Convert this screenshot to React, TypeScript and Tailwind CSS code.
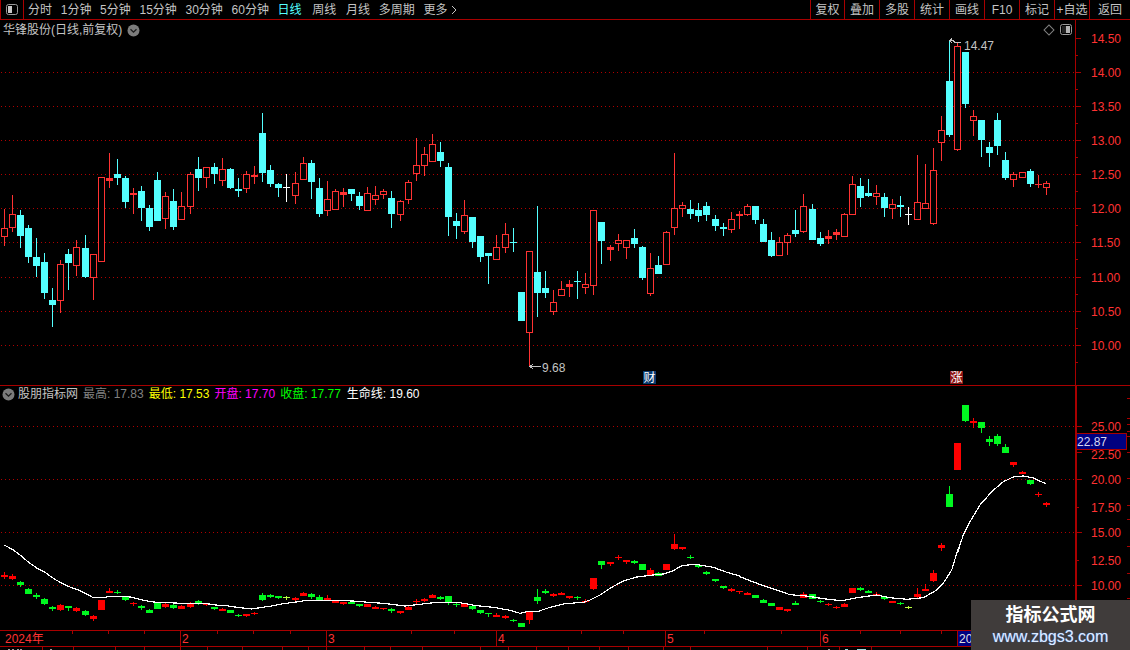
import React from "react";

const RED = "#ff3232";
const CYAN = "#54ffff";
const LINE = "#a80000";
const GRID = "#b00000";

type C = [string, number, number, number, number];

const cx = (i: number) => Math.floor(4.3 + i * 8.077);
const conv = (rows: C[], off: number): C[] =>
  rows.map(([t, a, b, c, d]) => [t, off + a / 3, off + b / 3, off + c / 3, off + d / 3]);

const upper: C[] = [
  ...conv(
    [
      ["r", 237, 295, 320, 348], ["r", 195, 253, 293, 305], ["c", 240, 255, 318, 354], ["c", 285, 294, 381, 399],
      ["c", 324, 381, 408, 441], ["c", 369, 396, 489, 507], ["c", 474, 510, 525, 591], ["r", 390, 403, 513, 549],
      ["c", 358, 372, 399, 480], ["r", 330, 352, 407, 438], ["c", 315, 354, 441, 444], ["r", 372, 373, 443, 510],
      ["r", 141, 142, 395, 396], ["r", 69, 145, 152, 174], ["c", 87, 132, 144, 165], ["c", 138, 144, 216, 234],
      ["r", 174, 189, 195, 252], ["c", 168, 183, 234, 273], ["c", 225, 234, 291, 303], ["c", 126, 150, 273, 273],
      ["r", 186, 199, 266, 297], ["c", 177, 213, 291, 300], ["r", 186, 229, 269, 270], ["r", 126, 133, 231, 252],
      ["c", 81, 117, 144, 183], ["r", 111, 112, 143, 174], ["c", 99, 111, 132, 162], ["r", 84, 118, 152, 168],
      ["c", 114, 117, 174, 177], ["c", 144, 177, 183, 201], ["r", 123, 133, 176, 189], ["r", 108, 135, 141, 162],
      ["c", -51, 9, 129, 156],
      ["c", 105, 120, 162, 171], ["c", 159, 162, 174, 201], ["w", 132, 171, 173, 216], ["r", 126, 160, 197, 222],
      ["r", 81, 100, 150, 150], ["c", 90, 99, 156, 207], ["c", 144, 174, 252, 261], ["r", 153, 208, 242, 258],
      ["r", 178, 184, 239, 240], ["r", 174, 187, 194, 231], ["c", 177, 177, 192, 213], ["c", 186, 198, 228, 240],
      ["r", 171, 190, 242, 243], ["r", 168, 196, 209, 225], ["r", 178, 184, 194, 207], ["c", 183, 204, 252, 294],
      ["r", 210, 214, 254, 273], ["r", 150, 157, 209, 222], ["r", 24, 106, 132, 153], ["r", 51, 73, 107, 138],
      ["r", 12, 43, 95, 96], ["c", 36, 66, 93, 111], ["c", 99, 111, 261, 318], ["c", 249, 273, 288, 327],
      ["r", 210, 256, 305, 312], ["c", 261, 261, 336, 354], ["c", 318, 318, 381, 396], ["c", 369, 369, 378, 462],
      ["r", 315, 352, 389, 390], ["r", 279, 313, 353, 369], ["c", 294, 336, 339, 366], ["c", 486, 486, 573, 573],
    ],
    130
  ),
  ...conv(
    [
      ["r", 334, 334, 578, 680], ["c", 198, 396, 459, 531], ["c", 393, 444, 459, 474], ["r", 450, 487, 515, 525],
      ["r", 423, 448, 467, 468], ["r", 420, 433, 440, 471], ["c", 393, 424, 426, 477], ["r", 399, 433, 443, 462],
      ["r", 210, 211, 437, 465], ["c", 246, 246, 303, 372], ["r", 315, 322, 329, 363], ["r", 282, 301, 311, 333],
      ["r", 301, 301, 323, 357], ["c", 267, 294, 312, 324], ["c", 318, 321, 414, 420], ["r", 339, 385, 461, 468],
      ["c", 348, 375, 402, 402], ["r", 273, 277, 374, 375], ["r", 39, 205, 263, 285], ["r", 186, 196, 206, 231],
      ["c", 180, 207, 222, 237], ["c", 189, 210, 228, 246], ["c", 186, 198, 225, 243], ["c", 225, 237, 258, 273],
      ["c", 249, 261, 267, 288], ["r", 216, 238, 269, 279], ["r", 213, 222, 228, 267], ["r", 192, 199, 224, 228],
      ["c", 198, 198, 240, 252], ["c", 237, 252, 306, 306], ["c", 276, 300, 348, 351],
    ],
    140
  ),
  ...conv(
    [
      ["r", 620, 637, 677, 677], ["r", 609, 616, 638, 675], ["c", 540, 600, 612, 621], ["r", 492, 529, 605, 609],
      ["c", 522, 537, 630, 630], ["c", 606, 624, 642, 648], ["r", 600, 619, 626, 642], ["r", 597, 607, 614, 630],
      ["r", 549, 553, 620, 621], ["r", 438, 463, 554, 555], ["c", 444, 468, 504, 531], ["c", 447, 489, 498, 501],
      ["r", 465, 490, 500, 525], ["c", 489, 501, 534, 561], ["r", 507, 523, 536, 567], ["c", 498, 525, 531, 561],
      ["w", 531, 551, 553, 585], ["r", 375, 517, 569, 570], ["r", 402, 520, 536, 537], ["r", 354, 421, 581, 585],
      ["r", 258, 301, 338, 393], ["c", 30, 153, 315, 321], ["r", 40, 49, 361, 362], ["c", 66, 66, 222, 234],
      ["r", 240, 259, 272, 318], ["c", 270, 270, 330, 381], ["c", 336, 351, 369, 411], ["c", 249, 270, 348, 375],
      ["c", 366, 390, 444, 450], ["r", 426, 433, 449, 471], ["r", 427, 427, 443, 443], ["c", 417, 423, 462, 471],
      ["r", 435, 462, 465, 474], ["r", 453, 460, 473, 495],
    ],
    30
  ),
];

const lower: C[] = [
  ...conv(
    [
      ["r", 96, 104, 110, 117], ["r", 102, 108, 117, 120], ["g", 123, 126, 135, 141], ["g", 144, 147, 162, 162],
      ["g", 159, 165, 171, 177], ["g", 174, 177, 192, 195], ["g", 198, 202, 208, 213], ["r", 192, 195, 210, 213],
      ["g", 198, 198, 203, 213], ["r", 200, 204, 213, 216], ["g", 210, 213, 225, 228], ["r", 225, 228, 237, 243],
      ["r", 180, 180, 210, 210], ["r", 144, 153, 159, 159], ["g", 150, 155, 158, 162], ["g", 168, 168, 180, 183],
      ["r", 186, 189, 191, 198], ["g", 195, 198, 204, 210], ["g", 207, 210, 219, 219], ["g", 186, 189, 207, 207],
      ["r", 189, 192, 201, 204], ["g", 192, 195, 204, 207], ["r", 195, 198, 207, 207], ["r", 186, 189, 201, 204],
      ["g", 180, 184, 189, 195], ["r", 189, 189, 195, 198], ["g", 201, 201, 207, 210], ["r", 204, 207, 213, 213],
      ["g", 210, 210, 219, 219], ["g", 222, 226, 228, 232], ["r", 222, 222, 228, 231], ["r", 216, 219, 221, 225],
      ["g", 159, 165, 180, 183], ["g", 162, 165, 171, 174], ["g", 168, 168, 174, 177], ["y", 168, 170, 171, 180],
      ["r", 171, 174, 179, 183], ["r", 156, 159, 167, 168], ["g", 159, 162, 171, 177], ["g", 165, 171, 183, 183],
      ["r", 165, 174, 180, 183], ["r", 180, 180, 189, 189], ["r", 186, 186, 191, 195], ["g", 186, 186, 192, 192],
      ["g", 192, 192, 197, 201], ["r", 191, 191, 201, 201],
    ],
    540
  ),
  ...conv(
    [
      ["r", 258, 261, 267, 268], ["r", 263, 264, 267, 270], ["g", 263, 266, 273, 279], ["r", 273, 273, 279, 282],
      ["r", 259, 261, 270, 270], ["r", 238, 244, 247, 252], ["r", 234, 237, 243, 245], ["r", 222, 225, 234, 234],
      ["g", 228, 231, 237, 240], ["g", 228, 228, 249, 255], ["g", 249, 253, 255, 261], ["r", 249, 252, 261, 261],
      ["g", 258, 258, 267, 270], ["g", 270, 270, 279, 282], ["g", 279, 279, 282, 291], ["r", 280, 285, 290, 291],
      ["r", 285, 288, 294, 297], ["g", 297, 300, 303, 306], ["g", 309, 309, 321, 321], ["r", 273, 274, 300, 312],
      ["g", 207, 231, 243, 252], ["g", 207, 212, 219, 222], ["r", 219, 222, 228, 231], ["r", 216, 219, 225, 226],
      ["r", 228, 228, 234, 237], ["g", 228, 232, 235, 240], ["r", 237, 242, 245, 249], ["r", 174, 174, 207, 210],
      ["g", 123, 123, 135, 147], ["r", 126, 126, 132, 138], ["r", 105, 111, 114, 120], ["r", 120, 120, 126, 132],
      ["g", 120, 123, 129, 132], ["g", 132, 132, 150, 150], ["r", 144, 150, 165, 166], ["g", 156, 160, 168, 168],
      ["r", 132, 132, 150, 150], ["r", 42, 72, 87, 90], ["r", 81, 81, 87, 90], ["g", 105, 110, 113, 117],
      ["g", 132, 134, 141, 144], ["g", 153, 156, 162, 165], ["g", 177, 177, 183, 186], ["g", 198, 198, 204, 207],
      ["r", 204, 207, 213, 215], ["r", 213, 213, 216, 222],
    ],
    520
  ),
  ...conv(
    [
      ["r", 156, 159, 164, 165], ["g", 165, 165, 174, 174], ["g", 177, 180, 189, 189], ["g", 189, 189, 198, 198],
      ["r", 201, 201, 210, 210], ["r", 207, 207, 212, 215], ["g", 183, 189, 195, 195], ["r", 156, 162, 174, 174],
      ["g", 162, 162, 177, 177], ["g", 180, 183, 186, 189], ["r", 189, 192, 195, 198], ["r", 198, 201, 204, 207],
      ["r", 189, 192, 201, 201], ["r", 144, 144, 159, 159], ["g", 141, 144, 150, 153], ["g", 150, 152, 159, 159],
      ["r", 156, 161, 164, 168], ["g", 168, 171, 177, 180], ["r", 183, 183, 188, 190], ["g", 186, 189, 192, 195],
      ["y", 198, 201, 202, 207], ["r", 144, 162, 171, 174], ["r", 132, 147, 153, 153], ["r", 90, 99, 123, 126],
      ["r", 9, 15, 24, 33],
    ],
    540
  ),
  ...conv(
    [
      ["g", 303, 327, 366, 366], ["r", 174, 174, 255, 255], ["g", 60, 60, 108, 110], ["r", 99, 108, 114, 129],
      ["g", 111, 111, 129, 144], ["g", 153, 162, 171, 183], ["g", 147, 153, 177, 183], ["g", 178, 186, 204, 204],
      ["r", 231, 231, 240, 246], ["r", 258, 261, 266, 268], ["g", 285, 285, 297, 300], ["r", 321, 327, 330, 336],
      ["r", 351, 354, 360, 366],
    ],
    385
  ),
];

const lifePts: [number, number, number[]][] = [
  [0, 540, [13,15, 40,30, 60,45, 85,66, 110,84, 135,97, 160,115, 185,130, 210,141, 235,150, 260,162, 278,172, 315,172, 330,169, 365,169, 390,171, 420,178, 445,184, 470,187, 510,188, 540,190, 580,190, 610,190, 635,193, 660,197, 680,197, 705,201, 730,204, 755,207, 780,203, 815,198, 850,191, 895,185, 920,181, 960,181, 1020,181, 1070,184, 1105,187]],
  [370, 520, [0,247, 50,251, 80,255, 105,258, 150,253, 200,247, 270,248, 320,257, 370,262, 420,271, 450,280, 470,275, 505,274, 540,262, 585,251, 640,247, 660,240, 690,225, 720,205, 760,183, 800,171, 850,165, 880,162, 910,152, 935,137, 975,133, 1030,142, 1070,157, 1110,168]],
  [740, 540, [0,110, 30,122, 70,137, 110,150, 150,164, 200,168, 250,176, 305,182, 350,173, 410,165, 450,173, 500,178, 550,173, 590,150, 610,130, 635,90, 650,40, 665,0]],
  [900, 385, [172,505, 190,450, 210,410, 240,360, 275,320, 310,290, 340,276, 370,273, 400,279, 437,296]],
];
const lifeLine = lifePts
  .flatMap(([ox, oy, p]) => {
    const out: string[] = [];
    for (let i = 0; i < p.length; i += 2) out.push(`${(ox + p[i] / 3).toFixed(1)},${(oy + p[i + 1] / 3).toFixed(1)}`);
    return out;
  })
  .join(" ");

function Candle({ i, d, fill }: { i: number; d: C; fill: "hollow" | "solid" }) {
  const [t, hi, top, bot, lo] = d;
  const color = t === "r" ? (fill === "solid" ? "#ff0000" : RED) : t === "c" ? CYAN : t === "g" ? "#00f820" : t === "w" ? "#ffffff" : "#b8ff40";
  const x = cx(i);
  const a = Math.round(hi), b = Math.round(top), c = Math.round(bot), e = Math.round(lo);
  const h = Math.max(c - b, 1);
  const hollow = fill === "hollow" && t === "r" && h > 3;
  return (
    <g>
      <rect x={x} y={a} width={1} height={Math.max(e - a, 1)} fill={color} />
      {hollow ? (
        <rect x={x - 2.5} y={b + 0.5} width={6} height={h - 1} fill="#000" stroke={color} strokeWidth={1} />
      ) : (
        <rect x={x - 3} y={b} width={7} height={h} fill={color} />
      )}
    </g>
  );
}

const PanelIcon = () => (
  <svg width="12" height="11" viewBox="0 0 12 11">
    <rect x="0.5" y="0.5" width="11" height="10" rx="2" fill="#000" stroke="#9a9a9a" />
    <rect x="6" y="2" width="4" height="7" fill="#b4b4b4" />
    <rect x="2" y="2" width="4" height="7" fill="#222" />
  </svg>
);

const Chevron = () => (
  <svg width="13" height="13" viewBox="0 0 13 13" className="shrink-0">
    <circle cx="6.5" cy="6.5" r="6" fill="#7c7c7c" />
    <path d="M3.5 5.2 L6.5 8.2 L9.5 5.2" fill="none" stroke="#1c1c1c" strokeWidth="1.3" />
  </svg>
);

const leftTabs = ["分时", "1分钟", "5分钟", "15分钟", "30分钟", "60分钟", "日线", "周线", "月线", "多周期", "更多"];
const rightTabs: [string, number][] = [
  ["复权", 34], ["叠加", 35], ["多股", 35], ["统计", 35], ["画线", 35], ["F10", 35], ["标记", 35], ["+自选", 35], ["返回", 41],
];

function Toolbar() {
  return (
    <div className="flex h-[20px] shrink-0 items-stretch border-b border-[#a80000] text-[12px] text-[#c4c4c4]">
      <div className="flex w-[24px] shrink-0 items-center justify-center border-x border-[#a80000]">
        <svg width="12" height="11" viewBox="0 0 12 11">
          <rect x="0.5" y="0.5" width="11" height="10" rx="2" fill="#000" stroke="#9a9a9a" />
          <rect x="2" y="2" width="4" height="7" fill="#c8c8c8" />
        </svg>
      </div>
      <div className="flex items-center gap-[8.7px] pl-[4px]">
        {leftTabs.map((t) => (
          <span
            key={t}
            className={t === "日线" ? "text-[#54ffff]" : t === "周线" ? "ml-[2px]" : t === "月线" ? "ml-[1px]" : ""}
          >
            {t}
          </span>
        ))}
        <svg width="6" height="10" viewBox="0 0 6 10" className="-ml-[5px]">
          <path d="M1 1 L5 5 L1 9" fill="none" stroke="#c4c4c4" />
        </svg>
      </div>
      <div className="ml-auto flex items-stretch">
        {rightTabs.map(([t, w]) => (
          <div key={t} style={{ width: w }} className="flex items-center justify-center border-l border-[#a80000]">{t}</div>
        ))}
      </div>
    </div>
  );
}

function UpperChart() {
  const grid = [72, 106, 140, 174, 208, 242, 277, 311, 345];
  return (
    <svg width="1075" height="365" viewBox="0 20 1075 365" shapeRendering="crispEdges" className="block">
      {grid.map((y) => (
        <line key={y} x1="1" x2="1075" y1={y + 0.5} y2={y + 0.5} stroke={GRID} strokeDasharray="1 3" />
      ))}
      {upper.map((d, i) => (
        <Candle key={i} i={i} d={d} fill="hollow" />
      ))}
      <g fill="none" stroke="#c4c4c4" strokeWidth="1">
        <path d="M530 366.5 H541" />
        <path d="M533 364 L530 366.5 L533 369" />
        <path d="M950 40.5 H953 L955 42.5 H961" />
        <path d="M952 38.5 L950 40.5 L952 43" />
      </g>
      <g fontFamily="'Liberation Sans',sans-serif" fontSize="12" fill="#c4c4c4" shapeRendering="auto">
        <text x="542" y="372">9.68</text>
        <text x="964" y="50">14.47</text>
      </g>
    </svg>
  );
}

function UpperAxis() {
  const labels = ["14.50", "14.00", "13.50", "13.00", "12.50", "12.00", "11.50", "11.00", "10.50", "10.00"];
  const ys = [38, 72, 106, 140, 174, 208, 242, 277, 311, 345];
  return (
    <svg width="54" height="365" viewBox="1076 20 54 365" shapeRendering="crispEdges" className="block">
      {ys.map((y, k) => (
        <g key={y}>
          <rect x="1076" y={y} width="5" height="1" fill={LINE} />
          <rect x="1076" y={y + 17} width="2" height="1" fill={LINE} />
          <text x="1091" y={y + 5} fontFamily="'Liberation Sans',sans-serif" fontSize="12" fill={RED} shapeRendering="auto">{labels[k]}</text>
        </g>
      ))}
    </svg>
  );
}

function LowerChart() {
  const grid = [426, 479, 532, 585];
  return (
    <svg width="1075" height="244" viewBox="0 386 1075 244" className="block">
      <g shapeRendering="crispEdges">
        {grid.map((y) => (
          <line key={y} x1="1" x2="1075" y1={y + 0.5} y2={y + 0.5} stroke={GRID} strokeDasharray="1 3" />
        ))}
        {lower.map((d, i) => (
          <Candle key={i} i={i} d={d} fill="solid" />
        ))}
        <polyline points={lifeLine} fill="none" stroke="#ffffff" strokeWidth="1.2" />
      </g>
    </svg>
  );
}

function LowerAxis() {
  const rows: [string, number][] = [["25.00", 426], ["22.50", 454], ["20.00", 479], ["17.50", 507], ["15.00", 532], ["12.50", 560], ["10.00", 585]];
  return (
    <svg width="53" height="244" viewBox="1077 386 53 244" shapeRendering="crispEdges" className="block">
      {rows.map(([t, y]) => (
        <g key={t}>
          <rect x="1077" y={t === "22.50" ? 452 : y} width={t === "17.50" ? 2 : t === "12.50" ? 2 : 5} height="1" fill={LINE} />
          <text x="1091" y={y + 5} fontFamily="'Liberation Sans',sans-serif" fontSize="12" fill={RED} shapeRendering="auto">{t}</text>
        </g>
      ))}
      {[398, 418, 424, 431, 436, 452, 478, 505, 519, 546, 573, 598].map((y) => (
        <rect key={y} x="1127" y={y} width="3" height="1" fill={LINE} />
      ))}
    </svg>
  );
}

function DateAxis() {
  const majors: [string, number][] = [["2", 180], ["3", 326], ["4", 496], ["5", 665], ["6", 820]];
  const ticks = [72, 108, 144, 217, 253, 290, 411, 454, 581, 623, 704, 781, 860, 900, 941];
  const foot = [42, 73, 115, 144, 180, 207, 242, 282, 308, 326, 364, 390, 422, 480, 508, 536, 568, 599, 628, 663, 690, 767, 807, 839, 871];
  return (
    <div className="shrink-0">
      <svg width="1130" height="17" viewBox="0 630 1130 17" shapeRendering="crispEdges" className="block">
        <rect x="0" y="630" width="1130" height="1" fill={LINE} />
        <rect x="0" y="646" width="1130" height="1" fill={LINE} />
        {ticks.map((x) => (
          <rect key={x} x={x} y="631" width="1" height="3" fill={LINE} />
        ))}
        {majors.map(([t, x]) => (
          <g key={t}>
            <rect x={x} y="631" width="1" height="15" fill={LINE} />
            <text x={x + 2} y="643" fontFamily="'Liberation Sans',sans-serif" fontSize="12" fill={RED} shapeRendering="auto">{t}</text>
          </g>
        ))}
        <text x="5" y="643" fontFamily="'Liberation Sans','Noto Sans CJK SC',sans-serif" fontSize="12" fill={RED} shapeRendering="auto">2024年</text>
        <rect x="957" y="631" width="15" height="15" fill="#000080" />
        <rect x="957" y="631" width="1" height="15" fill={LINE} />
        <text x="959" y="643" fontFamily="'Liberation Sans',sans-serif" fontSize="12" fill="#e0e0e0" shapeRendering="auto">20</text>
      </svg>
      <svg width="1130" height="3" viewBox="0 647 1130 3" shapeRendering="crispEdges" className="block">
        {foot.map((x) => (
          <rect key={x} x={x} y="647" width="1" height="3" fill={LINE} />
        ))}
        {[8, 12, 17, 20, 50, 828].map((x) => (
          <rect key={x} x={x} y="649" width="2" height="1" fill="#a0a0a0" />
        ))}
        <rect x="845" y="649" width="3" height="1" fill="#a0e0e0" />
        <rect x="857" y="649" width="9" height="1" fill="#a0e0e0" />
      </svg>
    </div>
  );
}

export default function App() {
  return (
    <div
      className="relative flex h-[650px] w-[1130px] flex-col overflow-hidden bg-black"
      style={{ fontFamily: "'Liberation Sans','Noto Sans CJK SC',sans-serif" }}
    >
      <Toolbar />

      <div className="flex h-[366px] shrink-0 border-b border-[#a80000]">
        <div className="relative w-[1075px] shrink-0">
          <UpperChart />
          <div className="absolute left-[3px] top-[1px] flex items-center gap-[5px] text-[12px] leading-[18px] text-[#c4c4c4]">
            <span>华锋股份(日线,前复权)</span>
            <Chevron />
          </div>
          <div className="absolute right-[3px] top-[4px] flex items-center gap-[7px]">
            <span className="block h-[8px] w-[8px] rotate-45 border border-[#808080]" />
            <PanelIcon />
          </div>
          <span className="absolute left-[643px] top-[351px] flex h-[13px] w-[13px] items-center justify-center bg-[#0a3a6e] text-[12px] leading-none text-white">财</span>
          <span className="absolute left-[950px] top-[351px] flex h-[13px] w-[13px] items-center justify-center bg-[#8c1414] text-[12px] leading-none text-white">涨</span>
        </div>
        <div className="w-[55px] shrink-0 border-l border-[#a80000]">
          <UpperAxis />
        </div>
      </div>

      <div className="flex h-[244px] shrink-0">
        <div className="relative w-[1075px] shrink-0">
          <LowerChart />
          <div className="absolute left-[2px] top-[0px] flex items-center text-[12px] leading-[17px]">
            <Chevron />
            <span className="ml-[3px] text-[#c4c4c4]">股朋指标网</span>
            <span className="ml-[5px] text-[#808080]">最高: 17.83</span>
            <span className="ml-[5px] text-[#ffff00]">最低: 17.53</span>
            <span className="ml-[5px] text-[#ff00ff]">开盘: 17.70</span>
            <span className="ml-[5px] text-[#00ff00]">收盘: 17.77</span>
            <span className="ml-[6px] text-white">生命线: 19.60</span>
          </div>
        </div>
        <div className="relative w-[55px] shrink-0 border-l-2 border-[#a80000]">
          <LowerAxis />
          <div className="absolute left-0 top-[47px] flex h-[17px] w-[50px] items-center border-y border-r border-[#a80000] bg-[#000080] text-[12px] leading-none text-[#d8d8f0]">
            22.87
          </div>
        </div>
      </div>

      <DateAxis />

      <div className="absolute bottom-0 right-0 flex h-[50px] w-[159px] flex-col items-center justify-center bg-[#403c3b]">
        <div className="text-[18px] font-bold leading-[24px] text-white">指标公式网</div>
        <div className="text-[16px] leading-[20px] text-[#dcecff]" style={{ textShadow: "0 0 1px #4a80ff" }}>www.zbgs3.com</div>
      </div>
    </div>
  );
}
